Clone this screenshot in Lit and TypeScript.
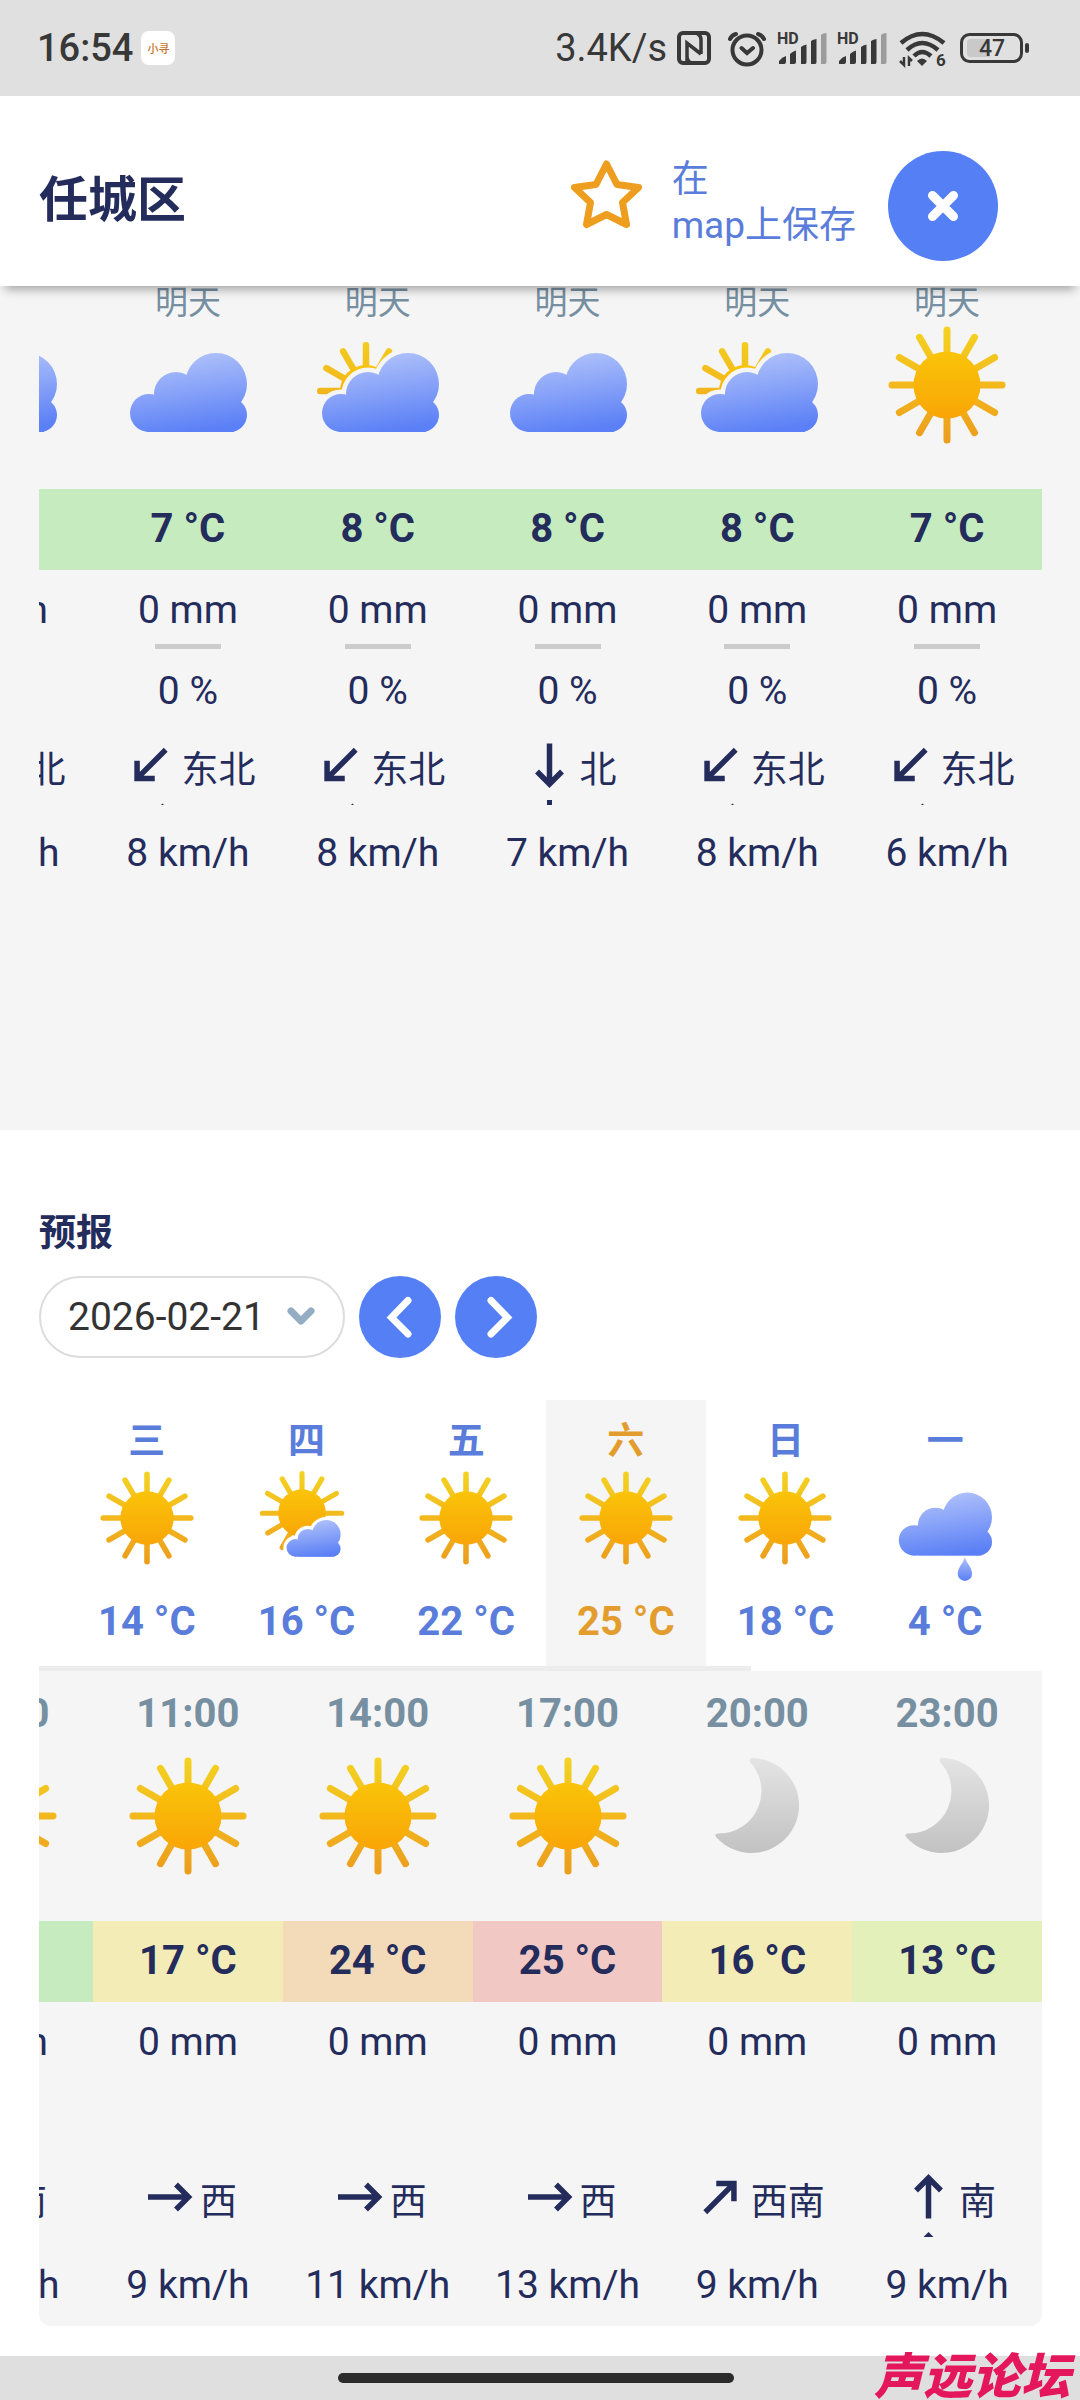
import { LitElement, html, svg, css, nothing } from "lit";
import { customElement, property, state } from "lit/decorators.js";
import { classMap } from "lit/directives/class-map.js";

type Sky = "sun" | "cloud" | "partly" | "mostly-sun" | "rain" | "moon";

interface Hour {
  label: string;
  sky: Sky;
  temp: string;
  tone: string;
  rain: string;
  chance: string;
  angle: number;
  wind: string;
  speed: string;
}

interface Day {
  name: string;
  sky: Sky;
  temp: string;
}

const hour = (
  label: string, sky: Sky, temp: number, tone: string,
  angle: number, wind: string, speed: number, chance = "",
): Hour => ({
  label, sky, temp: `${temp} °C`, tone, rain: "0 mm", chance, angle, wind, speed: `${speed} km/h`,
});

const TOMORROW: Hour[] = [
  hour("明天", "cloud", 8, "green", 135, "东北", 8, "0 %"),
  hour("明天", "cloud", 7, "green", 135, "东北", 8, "0 %"),
  hour("明天", "partly", 8, "green", 135, "东北", 8, "0 %"),
  hour("明天", "cloud", 8, "green", 90, "北", 7, "0 %"),
  hour("明天", "partly", 8, "green", 135, "东北", 8, "0 %"),
  hour("明天", "sun", 7, "green", 135, "东北", 6, "0 %"),
];

const SATURDAY: Hour[] = [
  hour("08:00", "sun", 9, "green", -90, "南", 9),
  hour("11:00", "sun", 17, "yellow", 0, "西", 9),
  hour("14:00", "sun", 24, "orange", 0, "西", 11),
  hour("17:00", "sun", 25, "red", 0, "西", 13),
  hour("20:00", "moon", 16, "yellow", -45, "西南", 9),
  hour("23:00", "moon", 13, "lime", -90, "南", 9),
];

const DAYS: Day[] = [
  { name: "三", sky: "sun", temp: "14 °C" },
  { name: "四", sky: "mostly-sun", temp: "16 °C" },
  { name: "五", sky: "sun", temp: "22 °C" },
  { name: "六", sky: "sun", temp: "25 °C" },
  { name: "日", sky: "sun", temp: "18 °C" },
  { name: "一", sky: "rain", temp: "4 °C" },
];

const DATES = ["2026-02-18", "2026-02-19", "2026-02-20", "2026-02-21", "2026-02-22", "2026-02-23"];

const RAYS = Array.from({ length: 12 }, (_, i) => (i * Math.PI) / 6);

const sunShape = (cx: number, cy: number, outer: number, disc: number, stroke: number) => svg`
  <g stroke="url(#ray)" stroke-width=${stroke} stroke-linecap="round">
    ${RAYS.map((a) => svg`<line
      x1=${cx + Math.cos(a) * (disc - 4) + 0.01} y1=${cy + Math.sin(a) * (disc - 4) + 0.01}
      x2=${cx + Math.cos(a) * (outer - stroke / 2)} y2=${cy + Math.sin(a) * (outer - stroke / 2)} />`)}
  </g>
  <circle cx=${cx} cy=${cy} r=${disc} fill="url(#disc)" />`;

const cloudShape = svg`
  <circle cx="87" cy="58" r="31" />
  <circle cx="47" cy="68" r="22" />
  <circle cx="20" cy="87" r="19" />
  <circle cx="101" cy="89" r="17" />
  <rect x="25" y="70" width="80" height="36" />
  <rect x="18" y="86" width="83" height="20" />`;

@customElement("weather-icon")
class WeatherIcon extends LitElement {
  @property() sky: Sky = "sun";

  static styles = css`
    :host { display: block; }
    .art { display: block; width: 100%; height: auto; overflow: visible; }
  `;

  private shape() {
    switch (this.sky) {
      case "sun":
        return sunShape(59, 59, 58.5, 33.5, 7);
      case "cloud":
        return svg`<g fill="url(#cloud)">${cloudShape}</g>`;
      case "partly":
        return svg`
          <mask id="gap" maskUnits="userSpaceOnUse" x="-10" y="-10" width="140" height="140">
            <rect x="-10" y="-10" width="140" height="90" fill="#fff" />
            <g transform="translate(2 0)" fill="#000" stroke="#000" stroke-width="9">${cloudShape}</g>
          </mask>
          <g mask="url(#gap)">${sunShape(47, 65, 49, 26, 6.5)}</g>
          <g transform="translate(2 0)" fill="url(#cloud)">${cloudShape}</g>`;
      case "mostly-sun":
        return svg`
          <mask id="gap" maskUnits="userSpaceOnUse" x="-10" y="-10" width="140" height="140">
            <rect x="-10" y="-10" width="140" height="140" fill="#fff" />
            <g transform="translate(34 46) scale(.58)" fill="#000" stroke="#000" stroke-width="14">${cloudShape}</g>
          </mask>
          <g mask="url(#gap)">${sunShape(54, 53, 53, 30, 6.5)}</g>
          <g transform="translate(34 46) scale(.58)" fill="url(#cloud)">${cloudShape}</g>`;
      case "rain":
        return svg`
          <g fill="url(#cloud)">${cloudShape}</g>
          <path d="M84 108 C86 116 93 121 93 129 A9 9 0 0 1 75 129 C75 121 82 116 84 108Z" fill="url(#drop)" />`;
      case "moon":
        return svg`<path fill="url(#moon)"
          d="M55 1 A47.5 47.5 0 1 1 18 80 Q16 76 21 76.500 A42.500 42.500 0 0 0 52 5 Q50 1 55 1Z" />`;
    }
  }

  render() {
    return html`
      <svg class="art" viewBox="0 0 118 118" aria-hidden="true">
        <defs>
          <linearGradient id="ray" gradientUnits="userSpaceOnUse" x1="0" y1="0" x2="0" y2="118">
            <stop offset="0" stop-color="#f3d321" />
            <stop offset=".5" stop-color="#f3b81d" />
            <stop offset="1" stop-color="#eb9c1d" />
          </linearGradient>
          <linearGradient id="disc" x1="0" y1="0" x2="0" y2="1">
            <stop offset="0" stop-color="#fac409" />
            <stop offset="1" stop-color="#f9a506" />
          </linearGradient>
          <linearGradient id="cloud" gradientUnits="userSpaceOnUse" x1="56" y1="27" x2="68" y2="106">
            <stop offset="0" stop-color="#b0c2fa" />
            <stop offset="1" stop-color="#5a7ff6" />
          </linearGradient>
          <linearGradient id="drop" x1="0" y1="0" x2="0" y2="1">
            <stop offset="0" stop-color="#b0c2fa" />
            <stop offset="1" stop-color="#5a7ff6" />
          </linearGradient>
          <linearGradient id="moon" x1="0" y1="0" x2="0" y2="1">
            <stop offset="0" stop-color="#e4e4e4" />
            <stop offset="1" stop-color="#c2c2c2" />
          </linearGradient>
        </defs>
        ${this.shape()}
      </svg>`;
  }
}

@customElement("hour-table")
class HourTable extends LitElement {
  @property({ attribute: false }) hours: Hour[] = [];
  @property() caption = "";
  @property({ type: Boolean }) compact = false;

  static styles = css`
    :host { display: block; }
    .grid {
      width: 100%;
      table-layout: fixed;
      border-collapse: collapse;
      color: #242c5c;
      font-size: 39px;
      line-height: 80px;
    }
    .edge { width: 54px; }
    .cell { padding: 0; font-weight: 400; }
    .clip { display: flex; justify-content: center; }
    .cell:first-child .clip { justify-content: flex-end; overflow: hidden; }
    .box {
      display: flex;
      flex: 0 0 190px;
      justify-content: center;
      height: 81px;
      white-space: nowrap;
    }
    .time { height: 86px; line-height: 86px; font-size: 40px; font-weight: 700; color: #768fa1; }
    .day { height: 40px; line-height: 34px; font-size: 33px; color: #768fa1; }
    .sky { height: 164px; }
    .low { height: 163px; }
    .icon { width: 118px; }
    .temp { font-size: 40px; font-weight: 700; }
    .green { background: #c5ebbf; }
    .yellow { background: #f3ecb6; }
    .orange { background: #f3dbba; }
    .red { background: #f1c8c3; }
    .lime { background: #e3f0b9; }
    .rain { flex-direction: column; align-items: center; justify-content: flex-start; }
    .amount { height: 74px; }
    .rule { width: 66px; height: 5px; background: #ccc; }
    .arrow { width: 61px; height: 73px; flex: none; }
    .wind { font-size: 37px; line-height: 78px; }
  `;

  private row(content: (h: Hour) => unknown, tone = false) {
    return html`<tr>
      ${this.hours.map((h) => html`
        <td class="cell ${tone ? h.tone : ""}"><div class="clip">${content(h)}</div></td>`)}
    </tr>`;
  }

  private arrow(h: Hour) {
    return html`
      <svg class="arrow" viewBox="0 0 61 73" aria-hidden="true">
        <g transform="rotate(${h.angle} 30.5 33)" fill="none" stroke="#242c5c" stroke-width="5.5">
          <path d="M9 33 H49 M37 20.500 L49.500 33 L37 45.500" />
        </g>
        ${h.angle === 90 ? svg`<rect x="28" y="68" width="5" height="5" fill="#242c5c" />` : nothing}
        ${h.angle === 135 ? svg`<path d="M41 73 L42.500 71.500 L44 73Z" fill="#242c5c" />` : nothing}
        ${h.angle === -90 ? svg`<path d="M25.500 73 L30.500 68 L35.500 73Z" fill="#242c5c" />` : nothing}
      </svg>`;
  }

  render() {
    const label = this.compact ? "box day" : "box time";
    return html`
      <table class="grid" aria-label=${this.caption}>
        <colgroup><col class="edge" />${this.hours.slice(1).map(() => html`<col />`)}</colgroup>
        <thead>
          <tr>
            ${this.hours.map((h) => html`
              <th class="cell" scope="col"><div class="clip"><div class=${label}>${h.label}</div></div></th>`)}
          </tr>
        </thead>
        <tbody>
          ${this.row((h) => html`<div class="box sky ${this.compact ? "low" : ""}"><weather-icon class="icon" .sky=${h.sky}></weather-icon></div>`)}
          ${this.row((h) => html`<div class="box temp">${h.temp}</div>`, true)}
          ${this.row((h) => html`
            <div class="box rain">
              <span class="amount">${h.rain}</span>
              ${h.chance ? html`<span class="rule"></span>` : nothing}
            </div>`)}
          ${this.row((h) => html`<div class="box">${h.chance}</div>`)}
          ${this.row((h) => html`<div class="box wind">${this.arrow(h)}<span>${h.wind}</span></div>`)}
          ${this.row((h) => html`<div class="box">${h.speed}</div>`)}
        </tbody>
      </table>`;
  }
}

@customElement("status-bar")
class StatusBar extends LitElement {
  static styles = css`
    :host { display: block; }
    .bar {
      display: flex;
      align-items: center;
      height: 96px;
      padding: 0 50px 0 37px;
      background: #e0e0e0;
      color: #383838;
      font-size: 38px;
      font-weight: 500;
    }
    .app {
      display: flex;
      align-items: center;
      justify-content: center;
      width: 34px;
      height: 34px;
      margin-left: 8px;
      border-radius: 8px;
      background: #fff;
      color: #c9742c;
      font-size: 11px;
    }
    .rate { margin-left: auto; font-weight: 400; }
    .icon { display: block; flex: none; height: 40px; overflow: visible; }
    .nfc { width: 34px; margin-left: 10px; }
    .alarm { width: 40px; margin-left: 16px; }
    .signal { width: 50px; margin-left: 10px; }
    .wifi { width: 48px; margin-left: 12px; }
    .battery { width: 70px; margin-left: 13px; }
    .hd { font-size: 16px; font-weight: 700; }
    .gen { font-size: 17px; font-weight: 700; }
    .level { font-size: 23px; font-weight: 500; }
  `;

  private signal() {
    return html`
      <svg class="icon signal" viewBox="0 0 50 40" fill="#383838" aria-label="信号">
        <text class="hd" x="0" y="16">HD</text>
        <path d="M2 36 V33 Q5 29 9 28 V34 Q9 36 7 36Z M13 36 V26 Q16 23 19 22.500 V34 Q19 36 17 36Z M24 36 V19 Q26 17 29.500 16.500 V34 Q29.500 36 28 36Z" />
        <path d="M34 36 V13 Q36 11.500 39.500 11 V34 Q39.500 36 38 36Z" />
        <path d="M44 36 V7 Q46 5 49.500 5 V34 Q49.500 36 48 36Z" fill="#9c9c9c" />
      </svg>`;
  }

  render() {
    return html`
      <div class="bar">
        <span>16:54</span>
        <span class="app">小寻</span>
        <span class="rate">3.4K/s</span>
        <svg class="icon nfc" viewBox="0 0 34 40" fill="none" stroke="#383838" stroke-width="4" aria-label="NFC">
          <rect x="2" y="5" width="30" height="30" rx="4" />
          <path d="M10 34 V15 L24 26 M17 5 H18 Q24 6 24 12 V26 M10 16 V28 Q10 34 15 35" stroke-width="3.500" />
        </svg>
        <svg class="icon alarm" viewBox="0 0 40 40" fill="none" stroke="#383838" stroke-width="4" stroke-linecap="round" aria-label="闹钟">
          <circle cx="20" cy="22" r="14.500" />
          <path d="M14.500 20 L20 25 L26 20 M3 11 Q5 7 9 6 M37 11 Q35 7 31 6" />
        </svg>
        ${this.signal()}
        ${this.signal()}
        <svg class="icon wifi" viewBox="0 0 48 40" fill="none" stroke="#383838" stroke-width="4.500" aria-label="Wi-Fi">
          <path d="M2 15 Q23 -3 45 15 M8 22 Q23 8 39 22 M15 28 Q23 20 32 28" />
          <path d="M18 33 Q23 28 28 33 L23 38Z" fill="#383838" stroke="none" />
          <path d="M5 29 V37 L1 33 M10 38 V30 L13 33" stroke-width="2.500" />
          <text class="gen" x="37" y="38" fill="#383838" stroke="none">6</text>
        </svg>
        <svg class="icon battery" viewBox="0 0 70 40" aria-label="电量">
          <rect x="1.500" y="6.500" width="60" height="27" rx="8" fill="none" stroke="#383838" stroke-width="3" />
          <path d="M11 11 H30 V29 H11 Q7 29 7 25 V15 Q7 11 11 11Z" fill="#c9c9c9" />
          <rect x="65" y="15" width="4" height="10" rx="2" fill="#383838" />
          <text class="level" x="32" y="28" text-anchor="middle" fill="#383838">47</text>
        </svg>
      </div>`;
  }
}

@customElement("app-root")
class AppRoot extends LitElement {
  @state() private active = 3;

  static styles = css`
    :host {
      display: block;
      background: #fff;
      font-family: Roboto, "Noto Sans CJK SC", sans-serif;
      color: #242c5c;
    }
    .header {
      position: relative;
      z-index: 1;
      display: flex;
      align-items: flex-start;
      padding: 55px 82px 25px 39px;
      background: #fff;
      box-shadow: 0 8px 10px -5px rgba(0, 0, 0, 0.36);
    }
    .place { flex: 1; margin: 0; font-size: 49px; font-weight: 700; line-height: 100px; }
    .save {
      display: flex;
      gap: 29px;
      padding: 6px 0 0;
      color: #5a7ddb;
      font-size: 37px;
      line-height: 46px;
      text-decoration: none;
    }
    .star { width: 72px; height: 70px; margin-top: 3px; }
    .close, .step {
      display: flex;
      align-items: center;
      justify-content: center;
      padding: 0;
      border: 0;
      border-radius: 50%;
      background: #557ff5;
    }
    .close { width: 110px; height: 110px; margin-left: 32px; }
    .glyph { display: block; width: 42px; height: 42px; }
    .today { padding: 0 38px 236px 39px; background: #f5f5f5; }
    .forecast { padding: 77px 38px 30px 39px; }
    .heading { margin: 0; font-size: 37px; font-weight: 700; line-height: 54px; }
    .controls { display: flex; gap: 14px; margin-top: 15px; }
    .picker { position: relative; }
    .date {
      display: block;
      width: 306px;
      height: 82px;
      padding: 0 27px;
      border: 2px solid #ddd;
      border-radius: 41px;
      background: #fff;
      color: #333;
      font: inherit;
      font-size: 39px;
      appearance: none;
    }
    .caret { position: absolute; right: 29px; top: 30px; width: 30px; height: 22px; pointer-events: none; }
    .step { width: 82px; height: 82px; }
    .days { display: grid; grid-template-columns: repeat(6, 1fr); margin: 42px 17px 0 28px; }
    .tab {
      display: flex;
      flex-direction: column;
      align-items: center;
      padding: 21px 0 23px;
      border: 0;
      background: none;
      color: #5a7ddb;
      font: inherit;
      font-size: 40px;
      font-weight: 700;
      line-height: 42px;
    }
    .tab.on { background: #f5f5f5; color: #e39d2e; }
    .name { font-size: 37px; }
    .icon { width: 94px; margin: 8px 0 36px; }
    .track { height: 5px; }
    .thumb { height: 5px; background: #ececec; }
    .hours { background: #f5f5f5; border-radius: 0 0 12px 12px; overflow: hidden; }
    .nav {
      position: relative;
      display: flex;
      align-items: center;
      justify-content: center;
      height: 44px;
      padding-right: 8px;
      background: #dfdfdf;
    }
    .pill { width: 37%; height: 10px; border-radius: 5px; background: #2b2b2b; }
    .mark {
      position: absolute;
      right: 10px;
      bottom: 0;
      color: #e5175c;
      font-family: "Noto Sans CJK SC", sans-serif;
      font-size: 49px;
      font-style: italic;
      font-weight: 900;
      line-height: 54px;
    }
  `;

  private select(index: number) {
    this.active = Math.max(0, Math.min(DAYS.length - 1, index));
  }

  render() {
    return html`
      <status-bar></status-bar>
      <header class="header">
        <h1 class="place">任城区</h1>
        <a class="save" href="#save">
          <svg class="star" viewBox="0 0 72 70" fill="none" stroke="#ee9e1e" stroke-width="7" stroke-linejoin="round" aria-hidden="true">
            <path d="M35.500 4 L46 24.500 L67.500 27.500 L51.500 42.500 L55.500 64.500 L35.500 54.500 L15.500 64.500 L19.500 42.500 L3.500 27.500 L25 24.500Z" />
          </svg>
          <span>在<br />map上保存</span>
        </a>
        <button class="close" aria-label="关闭">
          <svg class="glyph" viewBox="0 0 42 42" stroke="#fff" stroke-width="9" stroke-linecap="round">
            <path d="M10.500 10.500 L31.500 31.500 M31.500 10.500 L10.500 31.500" />
          </svg>
        </button>
      </header>
      <main>
        <section class="today">
          <hour-table caption="明天" compact .hours=${TOMORROW}></hour-table>
        </section>
        <section class="forecast">
          <h2 class="heading">预报</h2>
          <div class="controls">
            <div class="picker">
              <select class="date" aria-label="日期" @change=${(e: Event) => this.select((e.target as HTMLSelectElement).selectedIndex)}>
                ${DATES.map((d, i) => html`<option ?selected=${i === this.active}>${d}</option>`)}
              </select>
              <svg class="caret" viewBox="0 0 30 22" fill="none" stroke="#94adc2" stroke-width="7" stroke-linecap="round" stroke-linejoin="round">
                <path d="M5 5 L15 15 L25 5" />
              </svg>
            </div>
            <button class="step" aria-label="前一天" @click=${() => this.select(this.active - 1)}>
              <svg class="glyph" viewBox="0 0 42 42" fill="none" stroke="#fff" stroke-width="7" stroke-linecap="round">
                <path d="M29 4.500 L12.500 21.500 L29 38" />
              </svg>
            </button>
            <button class="step" aria-label="后一天" @click=${() => this.select(this.active + 1)}>
              <svg class="glyph" viewBox="0 0 42 42" fill="none" stroke="#fff" stroke-width="7" stroke-linecap="round">
                <path d="M16 4.500 L32.500 21.500 L16 38" />
              </svg>
            </button>
          </div>
          <div class="days">
            ${DAYS.map((d, i) => html`
              <button class=${classMap({ tab: true, on: i === this.active })} @click=${() => this.select(i)}>
                <span class="name">${d.name}</span>
                <weather-icon class="icon" .sky=${d.sky}></weather-icon>
                <span>${d.temp}</span>
              </button>`)}
          </div>
          <div class="track"><div class="thumb" style="width: 71%"></div></div>
          <div class="hours">
            <hour-table caption="逐时预报" .hours=${SATURDAY}></hour-table>
          </div>
        </section>
      </main>
      <footer class="nav">
        <span class="pill"></span>
        <span class="mark">声远论坛</span>
      </footer>`;
  }
}
